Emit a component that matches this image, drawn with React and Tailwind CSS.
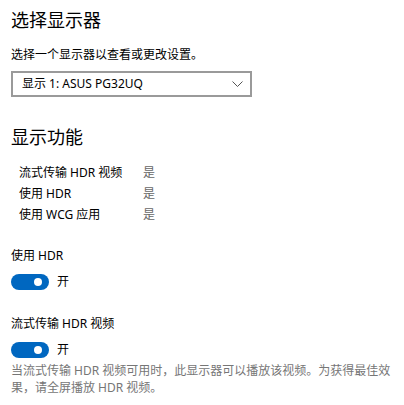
import React from "react";

function Toggle() {
  return (
    <div className="flex items-center">
      <div className="relative w-[38px] h-[16px] rounded-full bg-[#0067c0]">
        <div className="absolute right-[7px] top-[4px] w-[8px] h-[8px] rounded-full bg-white" />
      </div>
      <span className="ml-[8px] text-[12px] leading-[16px] text-black">开</span>
    </div>
  );
}

export default function App() {
  const font = { fontFamily: '"Noto Sans", "Noto Sans CJK SC", sans-serif' };
  return (
    <div className="w-[404px] h-[405px] bg-white px-[11px] pt-[8px] overflow-hidden" style={font}>
      <div className="text-[18px] leading-[24px] text-black">选择显示器</div>
      <div className="mt-[15px] text-[12px] leading-[16px] text-black">选择一个显示器以查看或更改设置。</div>
      <div className="mt-[8px] w-[241px] h-[26px] border-2 border-[#9a9a9a] flex items-center justify-between pl-[9px] pr-[7px]">
        <span className="text-[12px] leading-[16px] text-black">显示 1: ASUS PG32UQ</span>
        <svg width="11" height="6" viewBox="0 0 11 6" fill="none">
          <path d="M0.5 0.5 L5.5 5.5 L10.5 0.5" stroke="#555" strokeWidth="1" />
        </svg>
      </div>
      <div className="mt-[28px] text-[18px] leading-[24px] text-black">显示功能</div>
      <div className="mt-[13px] pl-[8px] flex flex-col">
        {[
          ["流式传输 HDR 视频", "是"],
          ["使用 HDR", "是"],
          ["使用 WCG 应用", "是"],
        ].map(([k, v]) => (
          <div key={k} className="flex text-[12px] leading-[21px]">
            <span className="w-[124px] text-black">{k}</span>
            <span className="text-[#666]">{v}</span>
          </div>
        ))}
      </div>
      <div className="mt-[23px] text-[12px] leading-[16px] text-black">使用 HDR</div>
      <div className="mt-[10px]">
        <Toggle />
      </div>
      <div className="mt-[26px] text-[12px] leading-[16px] text-black">流式传输 HDR 视频</div>
      <div className="mt-[10px]">
        <Toggle />
      </div>
      <div className="mt-[4px] text-[12px] leading-[17px] text-[#767676]">
        当流式传输 HDR 视频可用时，此显示器可以播放该视频。为获得最佳效
        <br />
        果，请全屏播放 HDR 视频。
      </div>
    </div>
  );
}
